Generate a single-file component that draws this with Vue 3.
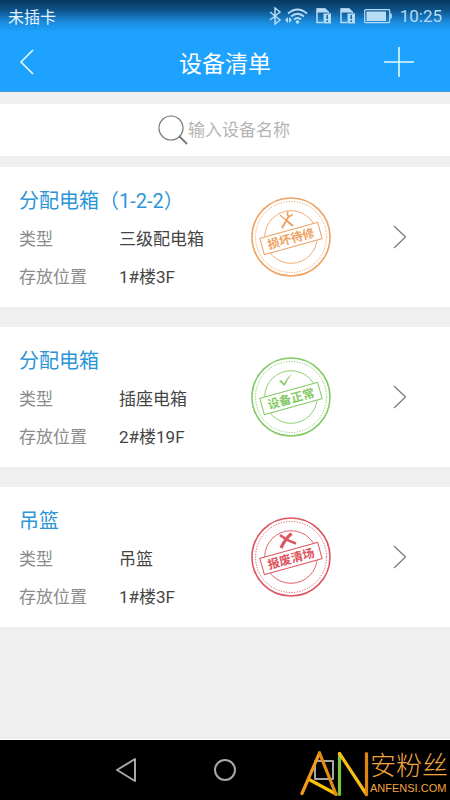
<script setup>
import { ref } from "vue";

const keyword = ref("");

const devices = [
  { name: "分配电箱（1-2-2）", type: "三级配电箱", place: "1#楼3F", state: "repair" },
  { name: "分配电箱", type: "插座电箱", place: "2#楼19F", state: "normal" },
  { name: "吊篮", type: "吊篮", place: "1#楼3F", state: "scrap" },
];

const stampText = {
  repair: "损坏待修",
  normal: "设备正常",
  scrap: "报废清场",
};
</script>

<template>
  <div class="page">
    <header class="top">
      <div class="status">
        <span class="carrier">未插卡</span>
        <div class="status-icons">
          <div class="radios">
            <svg width="12" height="18" viewBox="0 0 12 18">
              <path d="M1 5l10 8-5 4V1l5 4-10 8" fill="none" stroke="currentColor" stroke-width="1.5" />
            </svg>
            <svg width="22" height="18" viewBox="0 0 22 18">
              <g fill="none" stroke="currentColor" stroke-width="1.8">
                <path d="M2 6.5Q11.500-1.500 21 6.500" />
                <path d="M5 9.500Q11.500 4 18 9.500" />
                <path d="M8 12.500Q11.500 9.500 15 12.500" />
              </g>
              <circle cx="11.500" cy="15" r="1.800" fill="currentColor" />
              <path d="M-1 13l3-3v6zM6 13l-3-3v6z" fill="currentColor" />
            </svg>
          </div>
          <svg v-for="n in 2" :key="n" width="16" height="18" viewBox="0 0 16 18">
            <path d="M7 15.500H1V2h8l4 4" fill="none" stroke="currentColor" stroke-width="1.5" />
            <path d="M1 1.500h8L13 5.500H1z" fill="currentColor" />
            <path d="M7.500 6.500H15v10H7.500z" fill="currentColor" />
            <path d="M11.200 8v4M11.200 13.200v1.800" fill="none" stroke="#1571b5" stroke-width="1.6" />
          </svg>
          <svg width="28" height="18" viewBox="0 0 28 18">
            <rect x="0.700" y="2.700" width="25" height="13" rx="1" fill="none" stroke="currentColor" stroke-width="1.2" />
            <rect x="2.500" y="4.500" width="19.500" height="9.500" fill="currentColor" />
            <path d="M27 6.500v5" stroke="currentColor" stroke-width="1.6" />
          </svg>
          <span class="clock">10:25</span>
        </div>
      </div>
      <div class="title-bar">
        <button class="bar-btn back" type="button" aria-label="返回">
          <svg width="14" height="26" viewBox="0 0 14 26">
            <path d="M13 1L1 13l12 12" />
          </svg>
        </button>
        <h1>设备清单</h1>
        <button class="bar-btn add" type="button" aria-label="添加">
          <svg width="30" height="30" viewBox="0 0 30 30">
            <path d="M0 15h30M15 0v30" />
          </svg>
        </button>
      </div>
    </header>

    <label class="search">
      <svg width="30" height="30" viewBox="0 0 30 30">
        <circle cx="13" cy="13" r="12" />
        <path d="M21 21l8 8" stroke-width="1.8" />
      </svg>
      <input v-model="keyword" type="text" placeholder="输入设备名称" aria-label="输入设备名称" />
    </label>

    <main class="list">
      <a v-for="(d, i) in devices" :key="i" class="card" href="#">
        <div class="info">
          <h2>{{ d.name }}</h2>
          <dl>
            <dt>类型</dt>
            <dd>{{ d.type }}</dd>
            <dt>存放位置</dt>
            <dd>{{ d.place }}</dd>
          </dl>
        </div>
        <svg class="stamp" :class="d.state" width="80" height="80" viewBox="0 0 80 80">
          <g fill="none" stroke="currentColor">
            <circle cx="40" cy="40" r="39" stroke-width="1.6" />
            <circle cx="40" cy="40" r="35.500" stroke-width="1" stroke-dasharray="1.2 1.5" />
            <circle cx="40" cy="40" r="26.300" stroke-width="0.9" />
          </g>
          <g v-if="d.state === 'repair'" fill="none" stroke="currentColor">
            <path d="M29 18l12 10" stroke-width="1.2" />
            <path d="M36 24l6 5" stroke-width="2.2" />
            <path d="M31 31l7-12" stroke-width="2" />
            <path d="M37 14.500q-1.500 3 .5 4.500 3 .5 4-2" stroke-width="1.6" />
          </g>
          <path v-else-if="d.state === 'normal'" d="M28 24l2-1 3 3.500q3-6 8-10-4.500 6-7.500 12.500z" fill="currentColor" />
          <g v-else fill="none" stroke="currentColor">
            <path d="M29 18q6 5 16 8.500" stroke-width="2.4" />
            <path d="M30 31q4-9 10.500-14.500" stroke-width="3.2" />
          </g>
          <g transform="rotate(-15.500 40 41.500)">
            <rect x="10" y="33" width="60" height="17" fill="#fff" stroke="currentColor" stroke-width="1" />
            <text x="40" y="46" text-anchor="middle">{{ stampText[d.state] }}</text>
          </g>
        </svg>
        <svg class="arrow" width="14" height="24" viewBox="0 0 14 24">
          <path d="M1 1l11.500 11L1 23" />
        </svg>
      </a>
    </main>

    <nav class="nav">
      <button type="button" aria-label="后退">
        <svg width="24" height="26" viewBox="0 0 24 26"><path d="M21 2v22L3 13z" /></svg>
      </button>
      <button type="button" aria-label="主页">
        <svg width="24" height="26" viewBox="0 0 24 26"><circle cx="12" cy="13" r="10" /></svg>
      </button>
      <button type="button" aria-label="最近任务">
        <svg width="24" height="26" viewBox="0 0 24 26"><rect x="3" y="4" width="18" height="18" /></svg>
      </button>
      <div class="brand">
        <svg width="70" height="48" viewBox="0 0 70 48">
          <g fill="none" stroke-width="3.2" stroke-linecap="round">
            <path d="M10 30l26 14" stroke="#fdc400" />
            <path d="M2 43.500L19.500 3" stroke="#f39a1b" />
            <path d="M19.500 3l16.500 41.500" stroke="#e58a12" />
            <path d="M39.500 3.500v41" stroke="#7cc63c" />
            <path d="M39.500 3.500l27 41" stroke="#f7bf1a" />
            <path d="M66.500 3.500v41" stroke="#e08414" />
          </g>
        </svg>
        <div class="brand-text">
          <span class="brand-cn">安粉丝</span>
          <span class="brand-en">ANFENSI.COM</span>
        </div>
      </div>
    </nav>
  </div>
</template>

<style>
body {
  margin: 0;
  background: #f0f0f0;
}
</style>

<style scoped>
.page {
  display: flex;
  flex-direction: column;
  min-height: 100vh;
  background: #f0f0f0;
  font-family: Roboto, "Noto Sans CJK SC", sans-serif;
}

button {
  border: 0;
  padding: 0;
  background: none;
  cursor: pointer;
}

svg {
  display: block;
  flex: none;
  overflow: visible;
}

.top {
  background: linear-gradient(#06395e 0, #0d5288 10px, #1a8bdd 22px, #1ea2ff 32px);
  border-bottom: 1px solid #4b9ad6;
  color: #fff;
}

.status {
  display: flex;
  justify-content: space-between;
  align-items: center;
  height: 32px;
  padding: 0 8px;
}

.carrier {
  font-size: 16px;
  color: #e6f3fc;
}

.status-icons {
  display: flex;
  align-items: center;
  gap: 8px;
  color: #b9dcf5;
}

.radios {
  display: flex;
  gap: 5px;
}

.clock {
  font-size: 17px;
}

.title-bar {
  display: flex;
  justify-content: space-between;
  align-items: center;
  height: 59px;
  padding: 0 20px;
}

.title-bar h1 {
  margin: 0;
  font-size: 23px;
  font-weight: 400;
}

.bar-btn {
  display: flex;
  align-items: center;
  width: 46px;
  height: 46px;
}

.bar-btn.add {
  justify-content: center;
  margin-right: 8px;
}

.bar-btn.back {
  margin-right: 8px;
}

.bar-btn path {
  fill: none;
  stroke: #e2fbff;
  stroke-width: 1.6;
}

.search {
  display: flex;
  justify-content: center;
  align-items: center;
  height: 52px;
  margin: 12px 0 11px;
  background: #fff;
}

.search svg {
  fill: none;
  stroke: #777;
  stroke-width: 1.2;
}

.search input {
  width: 104px;
  padding: 0;
  border: 0;
  outline: 0;
  background: none;
  font: inherit;
  font-size: 17px;
  line-height: 26px;
  color: #444;
}

.search input::placeholder {
  color: #b4b4b4;
  opacity: 1;
}

.list {
  display: flex;
  flex: 1;
  flex-direction: column;
  gap: 20px;
}

.card {
  display: flex;
  align-items: center;
  height: 140px;
  padding: 0 43px 0 19px;
  background: #fff;
  color: inherit;
  text-decoration: none;
}

.info {
  flex: 1;
  padding-top: 4px;
}

.info h2 {
  margin: 0;
  font-size: 20px;
  font-weight: 400;
  line-height: 38px;
  color: #2b95d8;
}

.info dl {
  display: grid;
  grid-template-columns: 100px 1fr;
  margin: 0;
  font-size: 17px;
  line-height: 38px;
}

.info dt {
  color: #8c8c8c;
}

.info dd {
  margin: 0;
  color: #444;
}

.stamp {
  margin-right: 62px;
}

.stamp text {
  font-size: 12px;
  font-weight: 700;
  fill: currentColor;
}

.stamp.repair {
  color: #eda263;
}

.stamp.normal {
  color: #83c963;
}

.stamp.scrap {
  color: #dc5560;
}

.arrow path {
  fill: none;
  stroke: #777;
  stroke-width: 1.2;
}

.nav {
  position: relative;
  display: flex;
  height: 60px;
  padding: 0 17%;
  background: #000;
  border-top: 1px solid #fff;
}

.nav button {
  display: flex;
  flex: 1;
  justify-content: center;
  align-items: center;
}

.nav button svg {
  fill: none;
  stroke: #a8a8a8;
  stroke-width: 2;
  stroke-linejoin: round;
}

.brand {
  position: absolute;
  right: 0;
  bottom: 2px;
  display: flex;
  align-items: center;
  color: #f2a53c;
}

.brand-text {
  display: flex;
  flex-direction: column;
  width: 80px;
}

.brand-cn {
  font-size: 26px;
  font-weight: 300;
  line-height: 28px;
}

.brand-en {
  font-family: "Liberation Sans", sans-serif;
  font-size: 11px;
  line-height: 16px;
}
</style>
